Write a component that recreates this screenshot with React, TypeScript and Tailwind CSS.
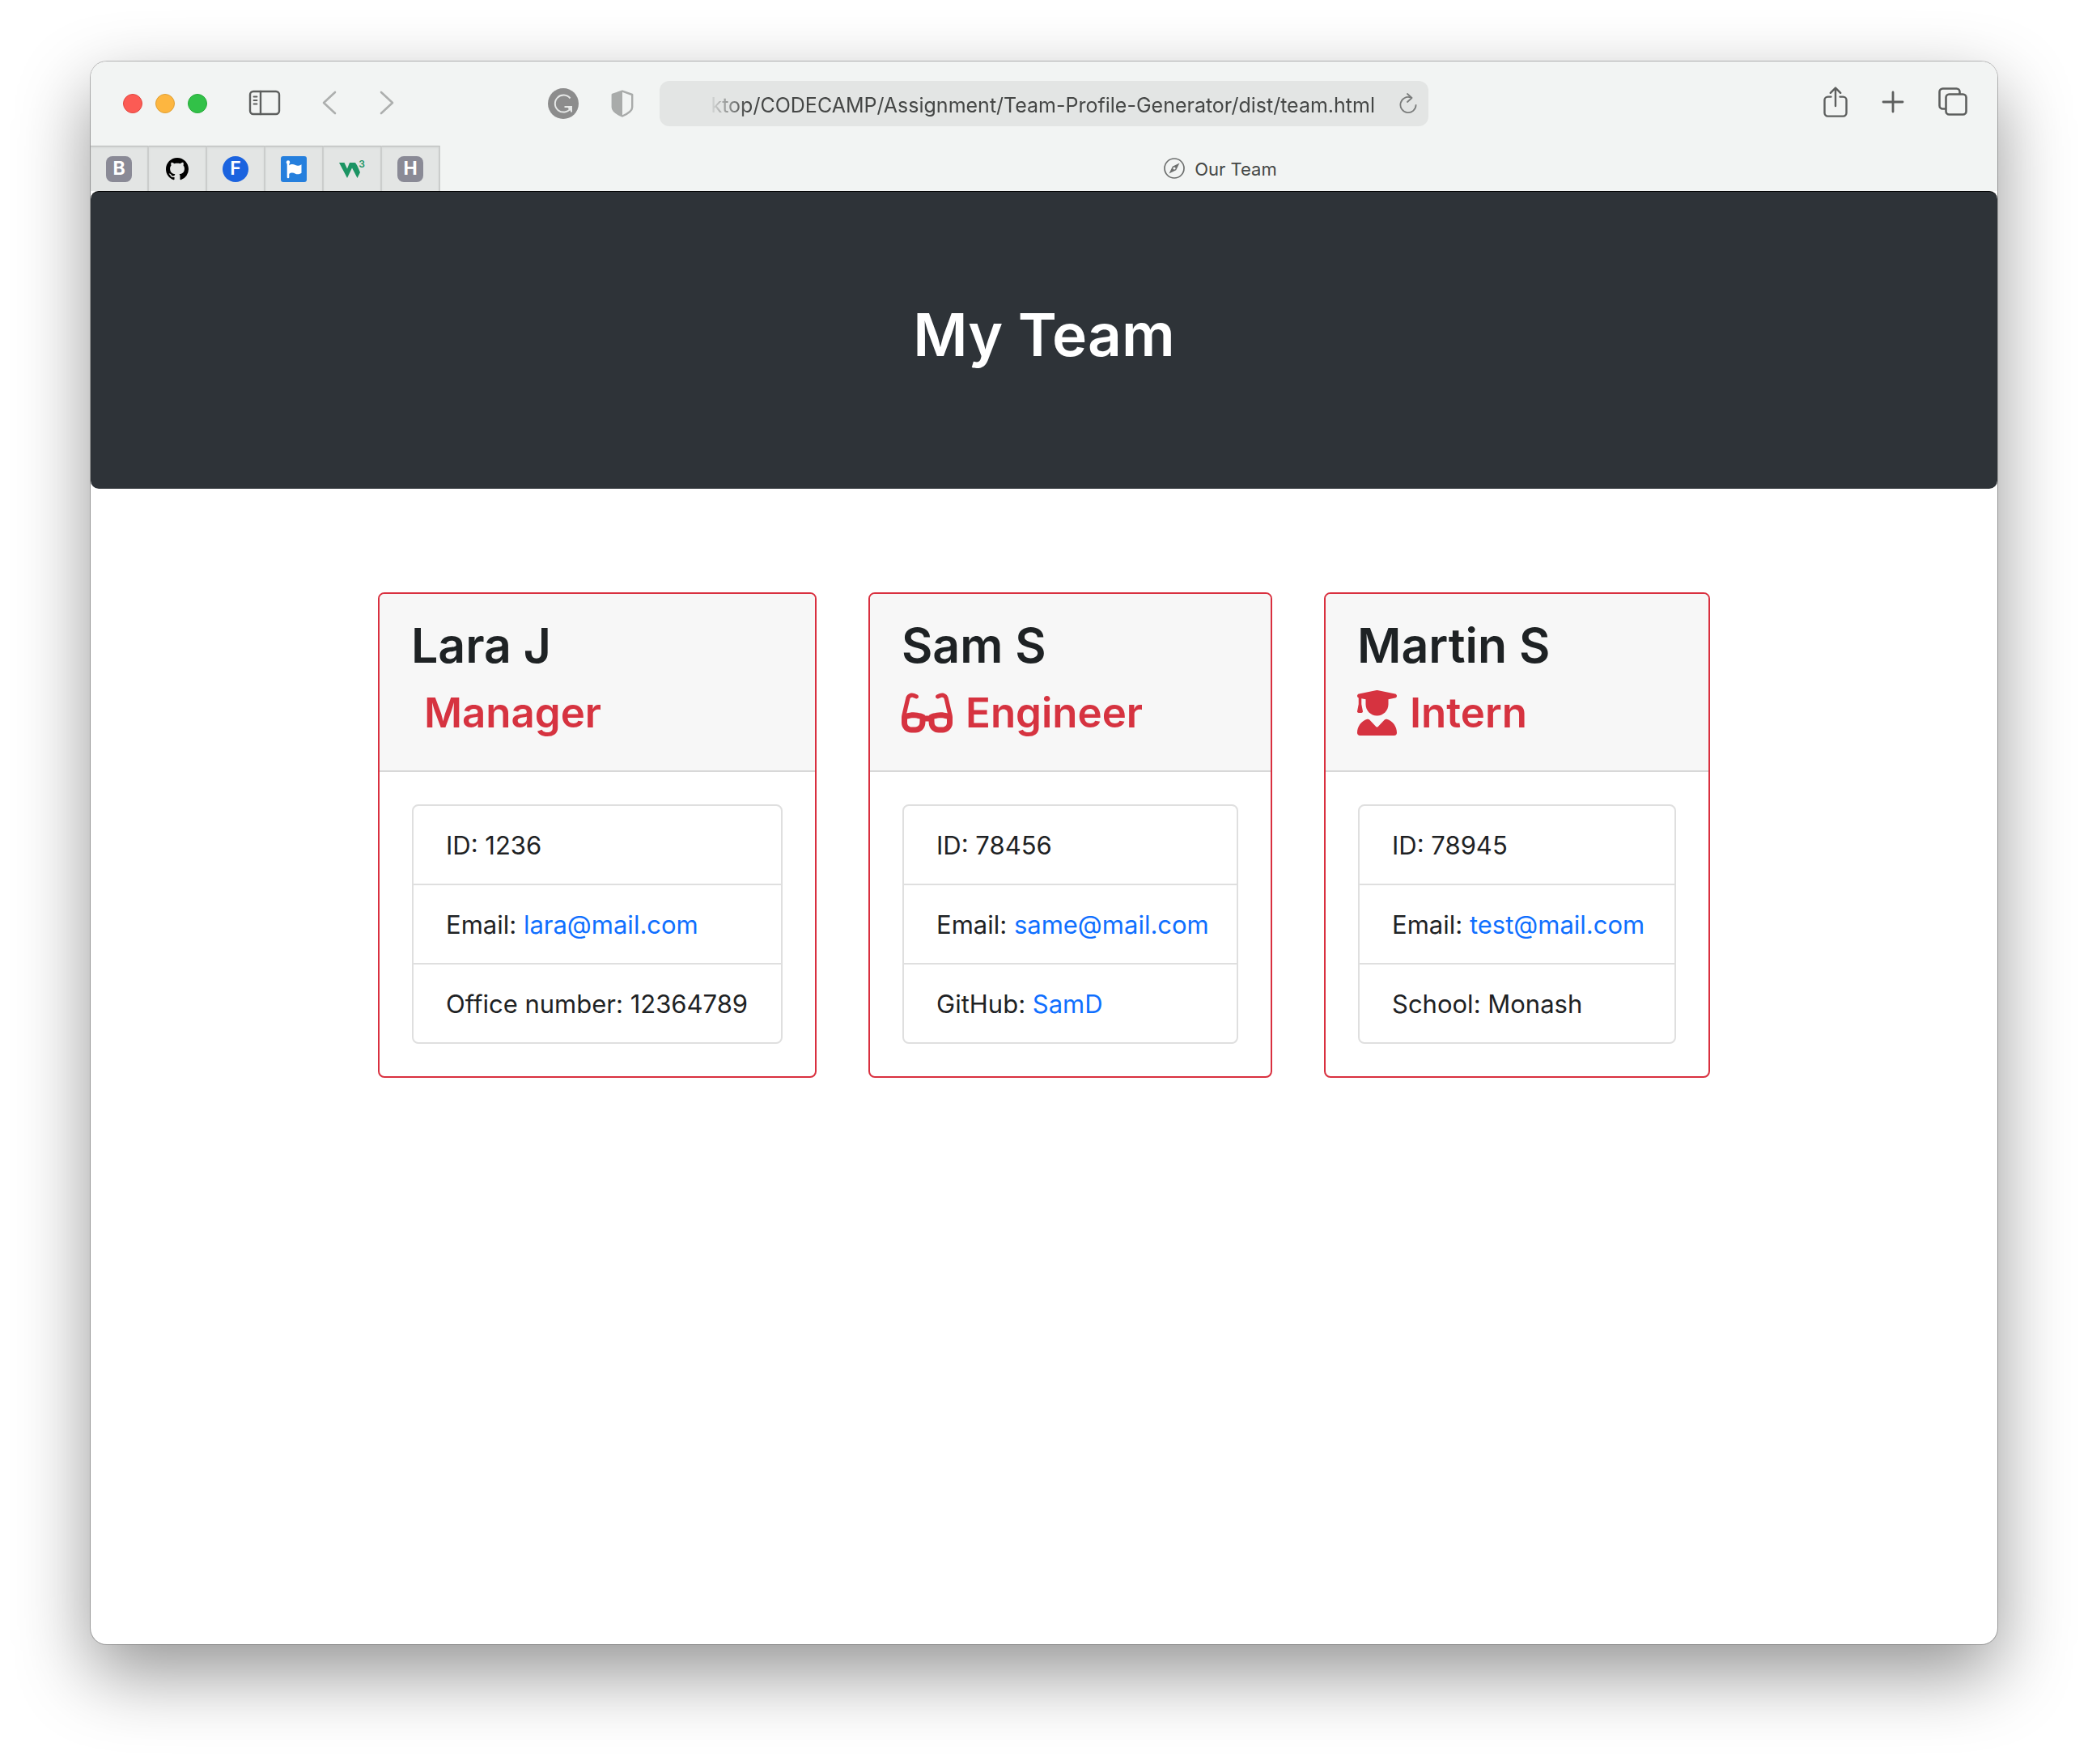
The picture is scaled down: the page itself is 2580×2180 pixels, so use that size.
import type { ReactNode } from "react";
import { FaGlasses, FaUserGraduate } from "react-icons/fa6";

function SidebarIcon() {
  return (
    <svg width="40" height="32" viewBox="0 0 40 32" fill="none" stroke="#5d5f5e" strokeWidth="2.4" strokeLinecap="round">
      <rect x="2" y="2" width="36" height="28" rx="4" />
      <path d="M15 2v28" />
      <path d="M6.5 8.5h4M6.5 13h4M6.5 17.5h4" strokeWidth="1.8" />
    </svg>
  );
}

function Chevron({ forward = false }: { forward?: boolean }) {
  return (
    <svg width="18" height="30" viewBox="0 0 18 30" fill="none" stroke="#adafae" strokeWidth="2.6" strokeLinecap="round" strokeLinejoin="round">
      <path d={forward ? "M2 2l14 13L2 28" : "M16 2L2 15l14 13"} />
    </svg>
  );
}

function GrammarlyIcon() {
  return (
    <svg width="38" height="38" viewBox="0 0 38 38" fill="none" stroke="#e6e8e7" strokeWidth="2">
      <circle cx="19" cy="19" r="19" fill="#8c8c8c" stroke="none" />
      <path d="M27.5 12.5A10.5 10.5 0 1 0 28 25" />
      <path d="M20.5 23h8.500v6.500" />
      <path d="M29.5 22.500v7l-5-5z" fill="#e6e8e7" stroke="none" />
    </svg>
  );
}

function ShieldIcon() {
  return (
    <svg width="28" height="34" viewBox="0 0 28 34">
      <path d="M14 1.600L26.200 6v15.500c0 4.200-6.500 8.500-12.200 11-5.700-2.500-12.200-6.800-12.200-11V6z" fill="none" stroke="#a9abaa" strokeWidth="2.4" strokeLinejoin="round" />
      <path d="M14 1.600v30.900c-5.700-2.500-12.200-6.800-12.200-11V6z" fill="#a9abaa" />
    </svg>
  );
}

function ReloadIcon() {
  return (
    <svg width="22" height="26" viewBox="0 0 22 26" fill="none" stroke="#7b7d7c" strokeWidth="1.8" strokeLinecap="round" strokeLinejoin="round">
      <path d="M14 5.400A9.600 9.600 0 1 0 20.600 14.800" />
      <path d="M10 1l5.500 5L10 11" />
    </svg>
  );
}

function ShareIcon() {
  return (
    <svg width="30" height="38" viewBox="0 0 30 38" fill="none" stroke="#5d5f5e" strokeWidth="2.4" strokeLinecap="round" strokeLinejoin="round">
      <path d="M9.500 12.600H5.500a4 4 0 0 0-4 4v16a4 4 0 0 0 4 4h19a4 4 0 0 0 4-4v-16a4 4 0 0 0-4-4h-4" />
      <path d="M15 24V2M8.800 7.800L15 1.600l6.200 6.200" />
    </svg>
  );
}

function PlusIcon() {
  return (
    <svg width="28" height="28" viewBox="0 0 28 28" fill="none" stroke="#5d5f5e" strokeWidth="2.8" strokeLinecap="round">
      <path d="M14 2v24M2 14h24" />
    </svg>
  );
}

function TabsIcon() {
  return (
    <svg width="36" height="36" viewBox="0 0 36 36" fill="none" stroke="#5d5f5e" strokeWidth="2.6" strokeLinejoin="round">
      <path d="M9.500 26.500h-4a4 4 0 0 1-4-4v-17a4 4 0 0 1 4-4h17a4 4 0 0 1 4 4v3" />
      <rect x="9.5" y="8.5" width="25" height="25" rx="4" />
    </svg>
  );
}

function CompassIcon() {
  return (
    <svg width="26" height="26" viewBox="0 0 26 26">
      <circle cx="13" cy="13" r="12" fill="none" stroke="#6d6f6e" strokeWidth="1.7" />
      <path d="M19.500 6.500l-4.300 8.700-8.700 4.300 4.300-8.700z" fill="#6d6f6e" />
      <circle cx="13" cy="13" r="1.6" fill="#f2f4f3" />
    </svg>
  );
}

function GitHubIcon() {
  return (
    <svg width="28" height="28" viewBox="0 0 16 16" fill="#000000">
      <path d="M8 0C3.58 0 0 3.58 0 8c0 3.54 2.29 6.53 5.47 7.59.4.07.55-.17.55-.38 0-.19-.01-.82-.01-1.49-2.01.37-2.53-.49-2.69-.94-.09-.23-.48-.94-.82-1.13-.28-.15-.68-.52-.01-.53.63-.01 1.08.58 1.23.82.72 1.21 1.87.87 2.33.66.07-.52.28-.87.51-1.07-1.78-.2-3.64-.89-3.64-3.95 0-.87.31-1.59.82-2.15-.08-.2-.36-1.02.08-2.12 0 0 .67-.21 2.2.82.64-.18 1.32-.27 2-.27.68 0 1.36.09 2 .27 1.53-1.04 2.2-.82 2.2-.82.44 1.1.16 1.92.08 2.12.51.56.82 1.27.82 2.15 0 3.07-1.87 3.75-3.65 3.95.29.25.54.73.54 1.48 0 1.07-.01 1.93-.01 2.2 0 .21.15.46.55.38A8.013 8.013 0 0016 8c0-4.42-3.58-8-8-8z" />
    </svg>
  );
}

function FlagIcon() {
  return (
    <svg width="32" height="32" viewBox="0 0 32 32" fill="#ffffff">
      <rect width="32" height="32" rx="3" fill="#257fdd" />
      <circle cx="9" cy="7.5" r="2.2" />
      <path d="M7.700 8h2.600v18a1.300 1.300 0 0 1-2.600 0z" />
      <path d="M10 11.500c3-2.200 5.500-1.600 8-.4 2.500 1 4.500.8 7.500-.9v10.600c-3 1.700-5 1.900-7.500.9-2.500-1.200-5-1.800-8 .4z" />
    </svg>
  );
}

function W3Icon() {
  return (
    <span className="relative block h-8 w-8">
      <svg width="32" height="32" viewBox="0 0 32 32" fill="#1c9463">
        <path d="M0 8h6.500l3.500 7.500L13 8h6.500c2 0 6.500 12 6.500 12l-3.500 7-6.500-12.500-6 12.500z" />
      </svg>
      <span className="absolute top-0 right-0 text-[12px] leading-[20px] font-semibold text-[#1c9463]">3</span>
    </span>
  );
}

function Letter({ children }: { children: ReactNode }) {
  return (
    <span className="flex h-8 w-8 items-center justify-center rounded-lg bg-[#8a8a96] text-[23px] leading-none font-bold text-white">
      {children}
    </span>
  );
}

const pinned: { label: string; icon: ReactNode }[] = [
  { label: "Bootstrap", icon: <Letter>B</Letter> },
  { label: "GitHub", icon: <GitHubIcon /> },
  {
    label: "Fonts",
    icon: (
      <span className="flex h-8 w-8 items-center justify-center rounded-full bg-[#1b63df] text-[23px] leading-none font-semibold text-white">
        F
      </span>
    ),
  },
  { label: "Flag", icon: <FlagIcon /> },
  { label: "W3Schools", icon: <W3Icon /> },
  { label: "H", icon: <Letter>H</Letter> },
];

function Toolbar() {
  return (
    <header className="grid h-[104px] grid-cols-[1fr_950px_1fr] items-center">
      <div className="flex items-center justify-between pr-8 pl-10">
        <div className="flex items-center">
          <div className="flex gap-4">
            <button aria-label="Close" className="h-6 w-6 rounded-full border border-[#e2463f] bg-[#fc5b54]" />
            <button aria-label="Minimise" className="h-6 w-6 rounded-full border border-[#dfa035] bg-[#fdb640]" />
            <button aria-label="Zoom" className="h-6 w-6 rounded-full border border-[#27a939] bg-[#32c148]" />
          </div>
          <div className="flex items-center pb-[2px] pl-[51px]">
            <button aria-label="Sidebar"><SidebarIcon /></button>
            <button aria-label="Back" className="ml-[51px]"><Chevron /></button>
            <button aria-label="Forward" className="ml-[53px]"><Chevron forward /></button>
          </div>
        </div>
        <div className="flex items-center gap-10">
          <button aria-label="Grammarly"><GrammarlyIcon /></button>
          <button aria-label="Privacy report"><ShieldIcon /></button>
        </div>
      </div>
      <div className="flex h-14 items-center rounded-xl bg-[#e3e5e4] pr-[14px] pl-[60px]">
        <input
          aria-label="Address"
          readOnly
          value="ktop/CODECAMP/Assignment/Team-Profile-Generator/dist/team.html"
          className="min-w-0 flex-1 bg-transparent pt-[3px] text-right text-[25px] leading-8 text-[#454746] outline-none [mask-image:linear-gradient(to_right,transparent,black_48px)]"
        />
        <button aria-label="Reload" className="ml-[30px]"><ReloadIcon /></button>
      </div>
      <div className="flex items-center justify-end gap-[42px] pr-[37px] pb-[4px]">
        <button aria-label="Share"><ShareIcon /></button>
        <button aria-label="New tab"><PlusIcon /></button>
        <button aria-label="Tab overview"><TabsIcon /></button>
      </div>
    </header>
  );
}

function TabBar() {
  return (
    <nav className="flex h-14">
      {pinned.map((tab) => (
        <button
          key={tab.label}
          aria-label={tab.label}
          className="flex w-[72px] items-center justify-center border-t border-r-2 border-t-[#b9bbba] border-r-[#cbcdcc] bg-[#e3e5e4] shadow-[inset_0_2px_2px_#d6d8d7]"
        >
          {tab.icon}
        </button>
      ))}
      <button className="flex flex-1 items-center justify-center gap-3 pl-1 text-[22px] leading-7 text-[#454746]">
        <CompassIcon />
        <span className="pt-[2px]">Our Team</span>
      </button>
    </nav>
  );
}

interface Member {
  name: string;
  role: string;
  icon: ReactNode;
  width: string;
  rows: { label: string; value: string; href?: string }[];
}

const members: Member[] = [
  {
    name: "Lara J",
    role: "Manager",
    icon: <span />,
    width: "min-w-[542px]",
    rows: [
      { label: "ID", value: "1236" },
      { label: "Email", value: "lara@mail.com", href: "mailto:lara@mail.com" },
      { label: "Office number", value: "12364789" },
    ],
  },
  {
    name: "Sam S",
    role: "Engineer",
    icon: <FaGlasses className="h-14 w-[63px]" />,
    width: "min-w-[499px]",
    rows: [
      { label: "ID", value: "78456" },
      { label: "Email", value: "same@mail.com", href: "mailto:same@mail.com" },
      { label: "GitHub", value: "SamD", href: "https://github.com/SamD" },
    ],
  },
  {
    name: "Martin S",
    role: "Intern",
    icon: <FaUserGraduate className="h-14 w-[49px]" />,
    width: "min-w-[477px]",
    rows: [
      { label: "ID", value: "78945" },
      { label: "Email", value: "test@mail.com", href: "mailto:test@mail.com" },
      { label: "School", value: "Monash" },
    ],
  },
];

function MemberCard({ member }: { member: Member }) {
  return (
    <article className={`overflow-hidden rounded-lg border-2 border-[#d9303f] ${member.width}`}>
      <div className="border-b-2 border-[#d8d8d8] bg-[#f7f7f7] px-[39px] pt-[25px] pb-[37px]">
        <h2 className="text-[59px] leading-[78px] font-semibold">{member.name}</h2>
        <h3 className="mt-[10px] flex items-center gap-4 text-[51px] leading-[68px] font-semibold text-[#d63340]">
          {member.icon}
          {member.role}
        </h3>
      </div>
      <div className="p-10">
        <ul className="divide-y-2 divide-[#dfdfdf] rounded-lg border-2 border-[#dfdfdf] text-[31px] leading-[48px]">
          {member.rows.map((row) => (
            <li key={row.label} className="pt-[25px] pr-8 pb-[23px] pl-10 whitespace-nowrap">
              {row.label}:{" "}
              {row.href ? <a href={row.href} className="text-[#0f6fff]">{row.value}</a> : row.value}
            </li>
          ))}
        </ul>
      </div>
    </article>
  );
}

export default function App() {
  return (
    <div className="flex min-h-screen flex-col bg-white px-28 pt-[76px] pb-[148px] font-['Inter','Liberation_Sans',sans-serif] text-[#1e2224]">
      <div className="flex flex-1 flex-col overflow-hidden rounded-[20px] bg-white shadow-[0_0_0_1px_rgba(0,0,0,0.25),0_36px_90px_rgba(0,0,0,0.42)]">
        <div className="bg-[#f2f4f3]">
          <Toolbar />
          <TabBar />
        </div>
        <main>
          <div className="rounded-[10px] border-t border-black bg-[#2e3338] pt-[129px] pb-[142px] text-center">
            <h1 className="text-[73px] leading-[96px] font-semibold text-white">My Team</h1>
          </div>
          <section className="flex flex-wrap justify-center gap-16 py-32">
            {members.map((m) => (
              <MemberCard key={m.name} member={m} />
            ))}
          </section>
        </main>
      </div>
    </div>
  );
}
